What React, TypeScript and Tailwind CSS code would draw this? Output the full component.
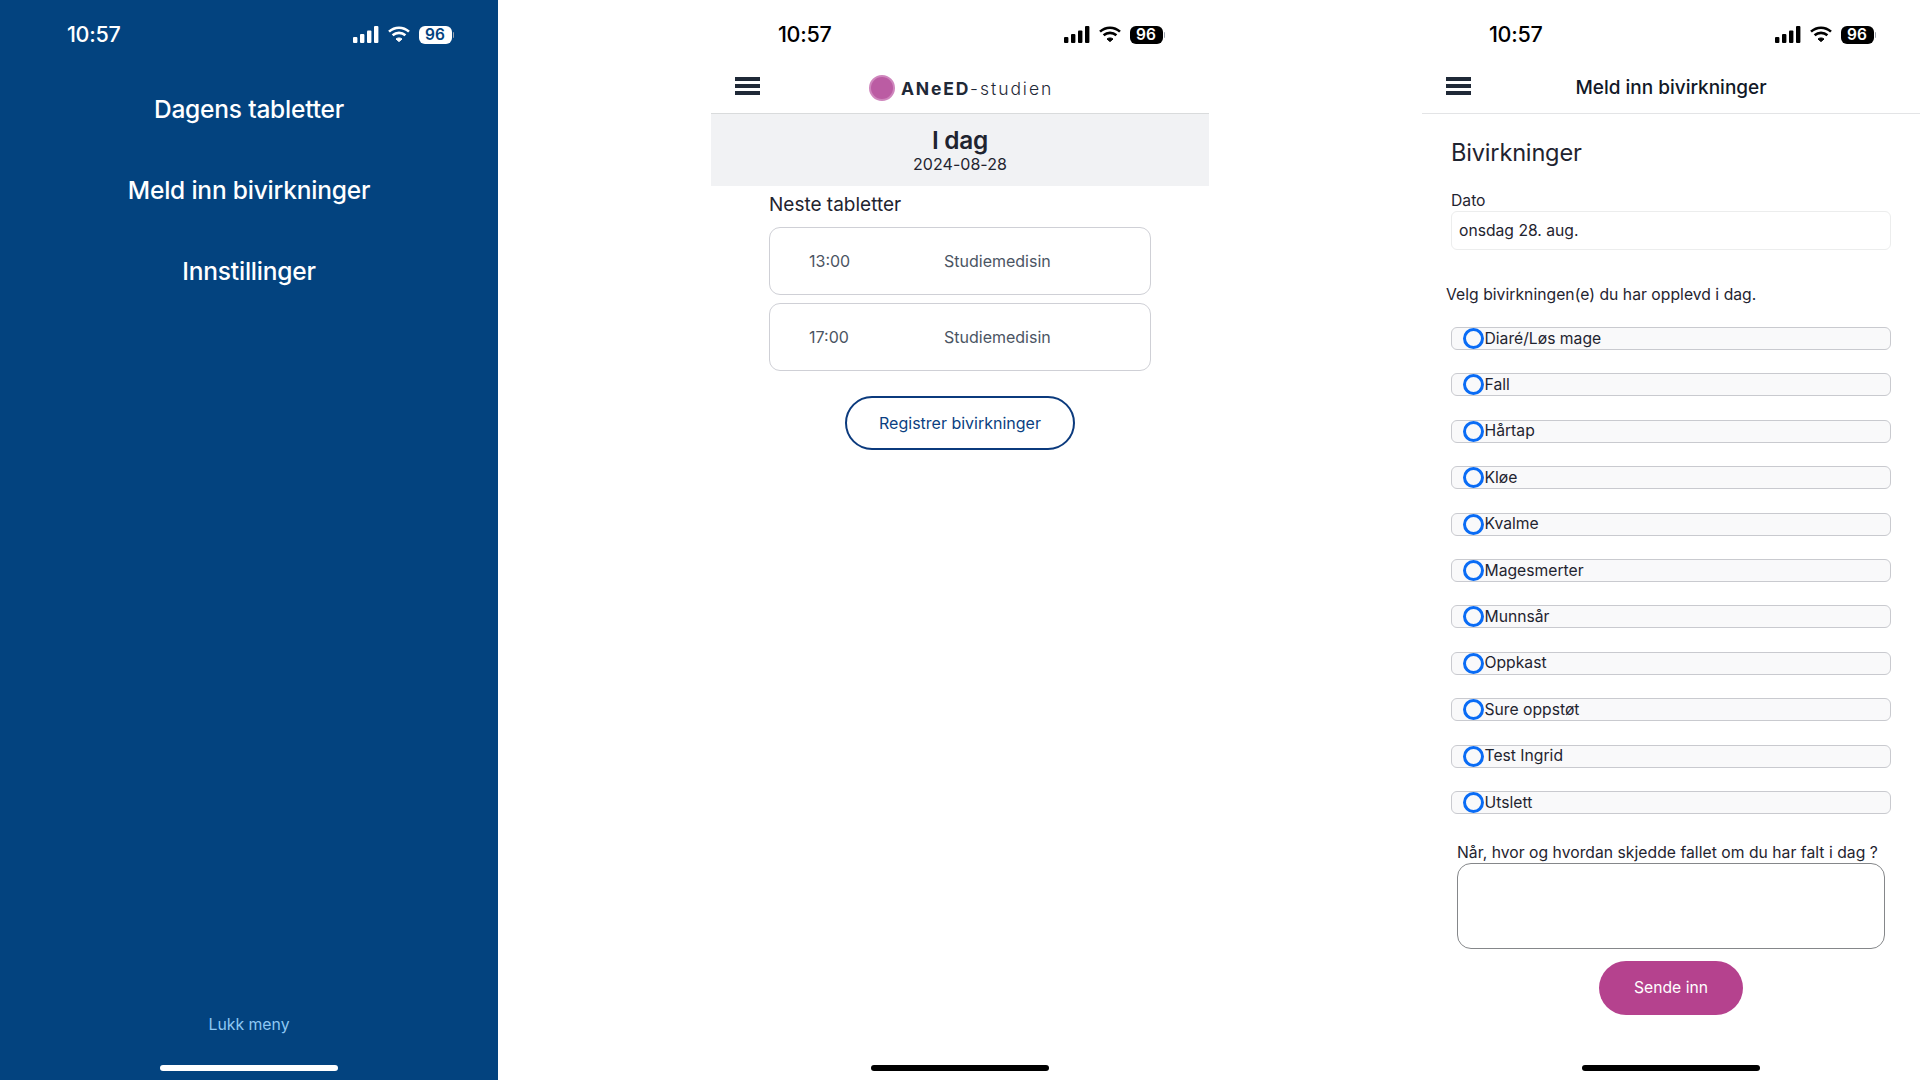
const font = { fontFamily: "Inter, 'Noto Sans', sans-serif" };

function StatusBar({ light }: { light?: boolean }) {
  const fg = light ? "#ffffff" : "#000000";
  return (
    <div className={`h-[68px] shrink-0 flex items-center pl-[67px] pr-[44px] pt-[1px] ${light ? "text-white" : "text-black"}`}>
      <span className="text-[21.5px] font-medium leading-none tracking-[-0.3px]">10:57</span>
      <div className="ml-auto flex items-center">
        <svg width="26" height="17" viewBox="0 0 26 17" fill={fg}>
          <rect x="0" y="11" width="4.4" height="6" rx="1" />
          <rect x="7" y="8" width="4.4" height="9" rx="1" />
          <rect x="14" y="4.5" width="4.4" height="12.5" rx="1" />
          <rect x="21" y="0" width="4.4" height="17" rx="1" />
        </svg>
        <svg className="ml-[9px]" width="22" height="17" viewBox="0 0 22 17" fill="none" stroke={fg} strokeWidth="2.6">
          <path d="M1 5.6 C6.8 0.4 15.2 0.4 21 5.6" />
          <path d="M4.6 9.3 C8.4 6 13.6 6 17.4 9.3" />
          <path d="M8 13 L11 15.6 L14 13 C12.2 11.6 9.8 11.6 8 13Z" fill={fg} strokeWidth="1" />
        </svg>
        <div className={`ml-[9px] w-[33px] h-[18px] rounded-[6px] flex items-center justify-center ${light ? "bg-white" : "bg-black"}`}>
          <span className={`text-[15.5px] font-semibold leading-none ${light ? "text-[#03437f]" : "text-white"}`}>96</span>
        </div>
        <div className="ml-[1px] w-[1.5px] h-[6px] rounded-r bg-[#9ca3af]" />
      </div>
    </div>
  );
}

function Hamburger() {
  return (
    <div className="w-[25px] flex flex-col gap-[3.5px]">
      <div className="h-[3.5px] bg-[#1f2937]" />
      <div className="h-[3.5px] bg-[#1f2937]" />
      <div className="h-[3.5px] bg-[#1f2937]" />
    </div>
  );
}

function HomeBar({ light }: { light?: boolean }) {
  return <div className={`mx-auto w-[178px] h-[6px] rounded-full shrink-0 mb-[9px] ${light ? "bg-white" : "bg-black"}`} />;
}

function MenuPanel() {
  const items = ["Dagens tabletter", "Meld inn bivirkninger", "Innstillinger"];
  return (
    <div className="w-[498px] h-[1080px] bg-[#03437f] flex flex-col text-white">
      <StatusBar light />
      <div className="flex flex-col pt-[1px]">
        {items.map((t) => (
          <div key={t} className="h-[81px] flex items-center justify-center text-[24.5px] font-medium tracking-[-0.2px]">
            {t}
          </div>
        ))}
      </div>
      <div className="mt-auto mb-[30px] text-center text-[15.8px] leading-[20px] text-[#8ec8f4]">Lukk meny</div>
      <HomeBar light />
    </div>
  );
}

function TodayPanel() {
  const rows = ["13:00", "17:00"];
  return (
    <div className="w-[498px] h-[1080px] bg-white flex flex-col">
      <StatusBar />
      <div className="h-[46px] shrink-0 border-b border-[#d9dbdc] pl-[24px] flex items-center relative">
        <div className="mt-[-9px]"><Hamburger /></div>
        <div className="absolute left-[158px] top-[7px] flex items-center gap-[6px]">
          <div className="w-[26px] h-[26px] rounded-full bg-[#bb5ca3] border-2 border-[#cf86bd]" />
          <span className="text-[17.5px] leading-none tracking-[1.95px] text-[#1f2937] mt-[2px] font-light">
            <b className="font-bold tracking-[1.8px]">ANeED</b>-studien
          </span>
        </div>
      </div>
      <div className="h-[72px] shrink-0 bg-[#f1f2f4] flex flex-col items-center text-[#1f2430] pt-[11px]">
        <div className="text-[24.4px] font-semibold leading-[30px] tracking-[-0.3px]">I dag</div>
        <div className="text-[16px] leading-[20px] tracking-[0.03px] mt-[-1px]">2024-08-28</div>
      </div>
      <div className="px-[58px] flex flex-col flex-1">
        <div className="mt-[7px] text-[19px] leading-[24px] text-[#1f2430]">Neste tabletter</div>
        <div className="mt-[10px] flex flex-col gap-[8px]">
          {rows.map((r) => (
            <div key={r} className="h-[68px] rounded-[11px] border-[1.5px] border-[#cfd0d6] flex items-center pl-[39px] text-[16px] text-[#4b5563]">
              <span className="w-[135px]">{r}</span>
              <span>Studiemedisin</span>
            </div>
          ))}
        </div>
        <div className="mt-[25px] self-center w-[230px] h-[54px] rounded-full border-[2.5px] border-[#0b3a7d] flex items-center justify-center text-[16px] text-[#0b3f82] pb-[1px]">
          Registrer bivirkninger
        </div>
      </div>
      <HomeBar />
    </div>
  );
}

function ReportPanel() {
  const options = ["Diaré/Løs mage", "Fall", "Hårtap", "Kløe", "Kvalme", "Magesmerter", "Munnsår", "Oppkast", "Sure oppstøt", "Test Ingrid", "Utslett"];
  return (
    <div className="w-[498px] h-[1080px] bg-white flex flex-col text-[#1f2430]">
      <StatusBar />
      <div className="h-[46px] shrink-0 border-b border-[#e3e4e6] pl-[24px] flex items-center relative">
        <div className="mt-[-9px]"><Hamburger /></div>
        <div className="absolute inset-x-0 top-[7px] text-center text-[19px] leading-[26px] font-medium text-[#111827]">Meld inn bivirkninger</div>
      </div>
      <div className="flex flex-col flex-1">
        <div className="ml-[29px] mt-[23px] text-[23.6px] leading-[32px] tracking-[-0.2px]">Bivirkninger</div>
        <div className="ml-[29px] mt-[22px] text-[15.7px] leading-[20px]">Dato</div>
        <div className="ml-[29px] w-[440px] h-[39px] rounded-[6px] border border-[#eceded] flex items-center pl-[7px] text-[15.7px]">onsdag 28. aug.</div>
        <div className="ml-[24px] mt-[34px] text-[15.7px] leading-[22px] tracking-[0.03px]">Velg bivirkningen(e) du har opplevd i dag.</div>
        <div className="mt-[21px] ml-[29px] w-[440px] flex flex-col gap-[23.4px]">
          {options.map((o) => (
            <div key={o} className="h-[23px] rounded-[6px] border-[1.5px] border-[#c9cacf] bg-[#f9f9fa] flex items-center pl-[11px] text-[15.7px]">
              <span className="w-[21px] h-[21px] shrink-0 rounded-full border-[3px] border-[#0a6cf5]" />
              <span className="leading-none ml-[0.5px]">{o}</span>
            </div>
          ))}
        </div>
        <div className="ml-[35px] mt-[28px] text-[15.7px] leading-[21px] tracking-[0.03px]">Når, hvor og hvordan skjedde fallet om du har falt i dag ?</div>
        <div className="ml-[35px] w-[428px] h-[86px] rounded-[14px] border border-[#85878a]" />
        <div className="mt-[12px] self-center w-[144px] h-[54px] rounded-full bg-[#b5428e] text-white text-[15.7px] flex items-center justify-center">Sende inn</div>
      </div>
      <HomeBar />
    </div>
  );
}

export default function App() {
  return (
    <div className="w-[1920px] h-[1080px] overflow-hidden bg-white flex justify-between" style={font}>
      <MenuPanel />
      <TodayPanel />
      <ReportPanel />
    </div>
  );
}
